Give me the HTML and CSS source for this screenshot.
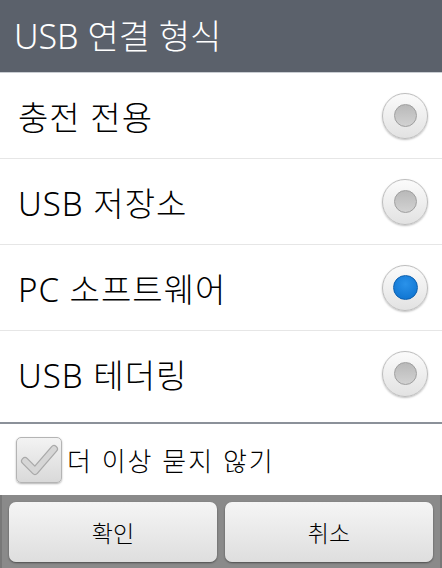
FILE: index.html
```html
<!DOCTYPE html>
<html lang="ko">

<head>
    <meta charset="UTF-8">
    <meta name="viewport" content="width=device-width, initial-scale=1.0">
    <title>USB 연결 형식</title>
    <link rel="stylesheet" href="styles.css">
</head>

<body>
    <div class="dialog">
        <div class="title">USB 연결 형식</div>

        <ul class="options">
            <li class="option">
                <span class="label">충전 전용</span>
                <span class="radio"></span>
            </li>
            <li class="option">
                <span class="label">USB 저장소</span>
                <span class="radio"></span>
            </li>
            <li class="option">
                <span class="label">PC 소프트웨어</span>
                <span class="radio checked"></span>
            </li>
            <li class="option">
                <span class="label">USB 테더링</span>
                <span class="radio"></span>
            </li>
        </ul>

        <div class="remember">
            <span class="checkbox">
                <svg width="40" height="40" viewBox="0 0 40 40">
                    <path d="M6 21 L16 31 L35 9" fill="none" stroke="#a9a9a9" stroke-width="8" stroke-linecap="round" stroke-linejoin="round" />
                    <path d="M6 21 L16 31 L35 9" fill="none" stroke="#d6d6d6" stroke-width="5.5" stroke-linecap="round" stroke-linejoin="round" />
                </svg>
            </span>
            <span class="remember-text">더 이상 묻지 않기</span>
        </div>

        <div class="buttons">
            <button class="btn">확인</button>
            <button class="btn">취소</button>
        </div>
    </div>
</body>

</html>
```

FILE: styles.css
```css
body {
    margin: 0;
    background-color: #ffffff;
    font-family: 'Noto Sans', 'Noto Sans CJK KR', sans-serif;
    color: #111;
}

.dialog {
    width: 442px;
    height: 568px;
    display: flex;
    flex-direction: column;
    background-color: #ffffff;
}

.title {
    height: 73px;
    box-sizing: border-box;
    padding: 13px 0 0 14px;
    background-color: #5b616b;
    border-bottom: 1px solid #c9cdd2;
    color: #ffffff;
    font-size: 34px;
    line-height: 46px;
    font-weight: 300;
}

.options {
    list-style: none;
    margin: 0;
    padding: 0 0 6px 0;
    border-bottom: 2px solid #8b9199;
}

.option {
    height: 86px;
    box-sizing: border-box;
    display: flex;
    justify-content: space-between;
    align-items: center;
    padding: 0 14px 0 18px;
    border-bottom: 1px solid #e6e6e6;
}

.option:last-child {
    border-bottom: none;
    height: 85px;
}

.label {
    font-size: 33px;
    letter-spacing: 1px;
    font-weight: 300;
    color: #000;
}

.radio {
    width: 44px;
    height: 44px;
    border-radius: 50%;
    border: 1px solid #bdbdbd;
    background: linear-gradient(#fbfbfb, #e2e2e2);
    box-shadow: 0 1px 2px rgba(0, 0, 0, 0.25);
    display: flex;
    justify-content: center;
    align-items: center;
}

.radio::after {
    content: '';
    width: 21px;
    height: 21px;
    border-radius: 50%;
    border: 1px solid #9e9e9e;
    background: linear-gradient(#b9b9b9, #d2d2d2);
}

.radio.checked::after {
    width: 23px;
    height: 23px;
    border: 1px solid #0c5fae;
    background: radial-gradient(circle at 50% 35%, #2a92ea, #0a6fcc);
}

.remember {
    height: 71px;
    display: flex;
    align-items: center;
    padding-left: 16px;
}

.checkbox {
    width: 46px;
    height: 46px;
    box-sizing: border-box;
    border: 1px solid #b4b4b4;
    border-radius: 5px;
    background: linear-gradient(#f3f3f3, #d9d9d9);
    box-shadow: 0 1px 2px rgba(0, 0, 0, 0.3);
    display: flex;
    justify-content: center;
    align-items: center;
}

.remember-text {
    margin-left: 5px;
    font-size: 26px;
    letter-spacing: 2px;
    font-weight: 300;
    color: #000;
}

.buttons {
    flex: 1;
    display: flex;
    gap: 8px;
    padding: 7px 7px 6px 7px;
    background-color: #8a8a8a;
    border-left: 2px solid #787878;
    border-right: 2px solid #787878;
    box-sizing: border-box;
}

.btn {
    flex: 1;
    border: none;
    border-radius: 7px;
    background: linear-gradient(#f5f5f5, #dedede);
    box-shadow: 0 1px 2px rgba(0, 0, 0, 0.45);
    font-family: 'Noto Sans', 'Noto Sans CJK KR', sans-serif;
    font-size: 23px;
    font-weight: 300;
    color: #000;
}
```
